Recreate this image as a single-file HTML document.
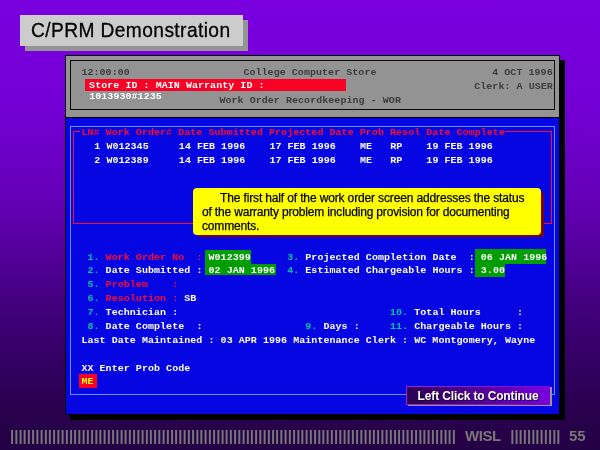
<!DOCTYPE html>
<html>
<head>
<meta charset="utf-8">
<title>C/PRM Demonstration</title>
<style>
html,body{margin:0;padding:0;}
body{width:600px;height:450px;overflow:hidden;position:relative;
  background:linear-gradient(to bottom,rgb(122,0,224) 0px,rgb(116,0,214) 100px,rgb(99,0,183) 200px,rgb(84,0,156) 250px,rgb(68,0,128) 300px,rgb(54,0,104) 350px,rgb(42,0,80) 405px,rgb(36,0,68) 450px);
  font-family:"Liberation Sans",sans-serif;}
#stage{position:absolute;left:0;top:0;width:600px;height:450px;overflow:hidden;will-change:transform;}
.abs{position:absolute;}
#tshadow{left:25px;top:20px;width:223px;height:30.5px;background:#949494;}
#tbox{left:20px;top:15px;width:223px;height:30.5px;background:#cccccc;}
#ttext{left:30.5px;top:18px;font-size:21px;line-height:24px;color:#000;white-space:pre;letter-spacing:0.43px;-webkit-text-stroke:0.3px #000;transform:scaleX(0.914);transform-origin:0 0;}
#wshadow{left:70px;top:60px;width:495px;height:360px;background:#000;}
#win{left:65px;top:55px;width:495px;height:360px;background:#000;}
#hdr{left:66px;top:56px;width:493px;height:60.7px;background:#939393;}
#hdrin{left:70px;top:60px;width:483px;height:48px;border:1px solid #0a0a0a;}
#blue{left:66px;top:117.7px;width:493px;height:296.3px;background:#0606e2;}
#lb{left:70px;top:126px;width:483px;height:267px;border:1px solid #6a90ff;}
.t{position:absolute;font:bold 10px/10px "Liberation Mono",monospace;letter-spacing:0.05px;white-space:pre;margin-left:-0.6px;transform:scaleY(0.92);transform-origin:0 0;}
.g{color:#3c3c3c;}
.w{color:#fff;}
.r{color:#ff0a28;}
.c{color:#00c49a;}
.y{color:#ffff00;}
#redbar{left:85px;top:79px;width:261px;height:12px;background:#fa0024;}
.grn{position:absolute;background:#009e00;}
#rbox{left:73px;top:131px;width:477px;height:91px;border:1px solid #ff0a30;}
#rboxgap{left:80px;top:129px;width:425px;height:6px;background:#0606e2;}
#tipsh{left:196.5px;top:192px;width:347.5px;height:44.7px;background:#7c0010;border-radius:4px;}
#tip{left:193px;top:188px;width:347.8px;height:46.5px;background:#ffff00;border-radius:4px;}
.tipl{font-size:12px;line-height:14px;color:#000;white-space:pre;letter-spacing:-0.17px;-webkit-text-stroke:0.25px #000;}
#mebox{left:79px;top:374px;width:18px;height:13.8px;background:#fa0024;}
#btnsh{left:407.6px;top:387.2px;width:144.3px;height:19.3px;background:#98988a;}
#btn{left:406px;top:386px;width:144px;height:19px;background:linear-gradient(to right,#9624e6,#7c02e0);}
#btnin{left:407px;top:387px;width:142.5px;height:17px;background:linear-gradient(to right,#2d0050,#7a00e0);}
#btntext{left:417.6px;top:389px;font-weight:bold;font-size:12px;line-height:14px;color:#fff;white-space:pre;letter-spacing:-0.14px;text-shadow:1px 1px 0 #14002a;}
.bars{position:absolute;font-weight:bold;font-size:15px;line-height:16px;color:#787878;white-space:pre;top:428px;}
</style>
</head>
<body>
<div id="stage">
<div class="abs" id="tshadow"></div>
<div class="abs" id="tbox"></div>
<div class="abs" id="ttext">C/PRM Demonstration</div>

<div class="abs" id="wshadow"></div>
<div class="abs" id="win"></div>
<div class="abs" id="hdr"></div>
<div class="abs" id="hdrin"></div>
<div class="abs" id="blue"></div>
<div class="abs" id="lb"></div>

<div class="t g" style="left:82px;top:69px;">12:00:00</div>
<div class="t g" style="left:244px;top:69px;">College Computer Store</div>
<div class="t g" style="left:492.8px;top:69px;">4 OCT 1996</div>
<div class="abs" id="redbar"></div>
<div class="t w" style="left:89.7px;top:82px;">Store ID : MAIN Warranty ID :</div>
<div class="t g" style="left:474.8px;top:83px;">Clerk: A USER</div>
<div class="t w" style="left:89.8px;top:93px;">1013930#1235</div>
<div class="t g" style="left:220px;top:97px;">Work Order Recordkeeping - WOR</div>

<div class="abs" id="rbox"></div>
<div class="abs" id="rboxgap"></div>
<div class="t r" style="left:82px;top:129px;">LN# Work Order# Date Submitted Projected Date Prob Resol Date Complete</div>
<div class="t w" style="left:82.9px;top:143px;letter-spacing:0.035px;">  1 W012345     14 FEB 1996    17 FEB 1996    ME   RP    19 FEB 1996</div>
<div class="t w" style="left:82.9px;top:157px;letter-spacing:0.035px;">  2 W012389     14 FEB 1996    17 FEB 1996    ME   RP    19 FEB 1996</div>

<div class="abs" id="tipsh"></div>
<div class="abs" id="tip"></div>
<div class="abs tipl" style="left:220px;top:191px;letter-spacing:-0.14px;">The first half of the work order screen addresses the status</div>
<div class="abs tipl" style="left:202px;top:205px;">of the warranty problem including provision for documenting</div>
<div class="abs tipl" style="left:202px;top:219px;">comments.</div>

<div class="grn" style="left:205px;top:250px;width:46px;height:14px;"></div>
<div class="grn" style="left:205px;top:264px;width:71px;height:10.6px;"></div>
<div class="grn" style="left:475px;top:249px;width:71px;height:15px;"></div>
<div class="grn" style="left:475px;top:264px;width:30px;height:12.7px;"></div>

<div class="t w" style="left:82px;top:254px;"><span class="c"> 1.</span><span class="r"> Work Order No  :</span> W012399      <span class="c">3.</span> Projected Completion Date  : 06 JAN 1996</div>
<div class="t w" style="left:82px;top:267px;"><span class="c"> 2.</span> Date Submitted : 02 JAN 1996  <span class="c">4.</span> Estimated Chargeable Hours : 3.00</div>
<div class="t w" style="left:82px;top:281px;"><span class="c"> 5.</span><span class="r"> Problem    :</span></div>
<div class="t w" style="left:82px;top:295px;"><span class="c"> 6.</span><span class="r"> Resolution :</span> SB</div>
<div class="t w" style="left:82px;top:309px;"><span class="c"> 7.</span> Technician :                                   <span class="c">10.</span> Total Hours      :</div>
<div class="t w" style="left:82px;top:323px;"><span class="c"> 8.</span> Date Complete  :                 <span class="c">9.</span> Days :     <span class="c">11.</span> Chargeable Hours :</div>
<div class="t w" style="left:82px;top:337px;">Last Date Maintained : 03 APR 1996 Maintenance Clerk : WC Montgomery, Wayne</div>
<div class="t w" style="left:82px;top:365px;">XX Enter Prob Code</div>
<div class="abs" id="mebox"></div>
<div class="t y" style="left:82px;top:378px;">ME</div>

<div class="abs" id="btnsh"></div>
<div class="abs" id="btn"></div>
<div class="abs" id="btnin"></div>
<div class="abs" id="btntext">Left Click to Continue</div>

<div class="bars" style="left:10px;letter-spacing:0.011px;">||||||||||||||||||||||||||||||||||||||||||||||||||||||||||||||||||||||||||||||||||||||||||||||||||||||||||</div>
<div class="bars" style="left:465.1px;letter-spacing:-0.5px;">WISL</div>
<div class="bars" style="left:510.2px;">||||||||||||</div>
<div class="bars" style="left:569px;">55</div>
</div>
</body>
</html>
